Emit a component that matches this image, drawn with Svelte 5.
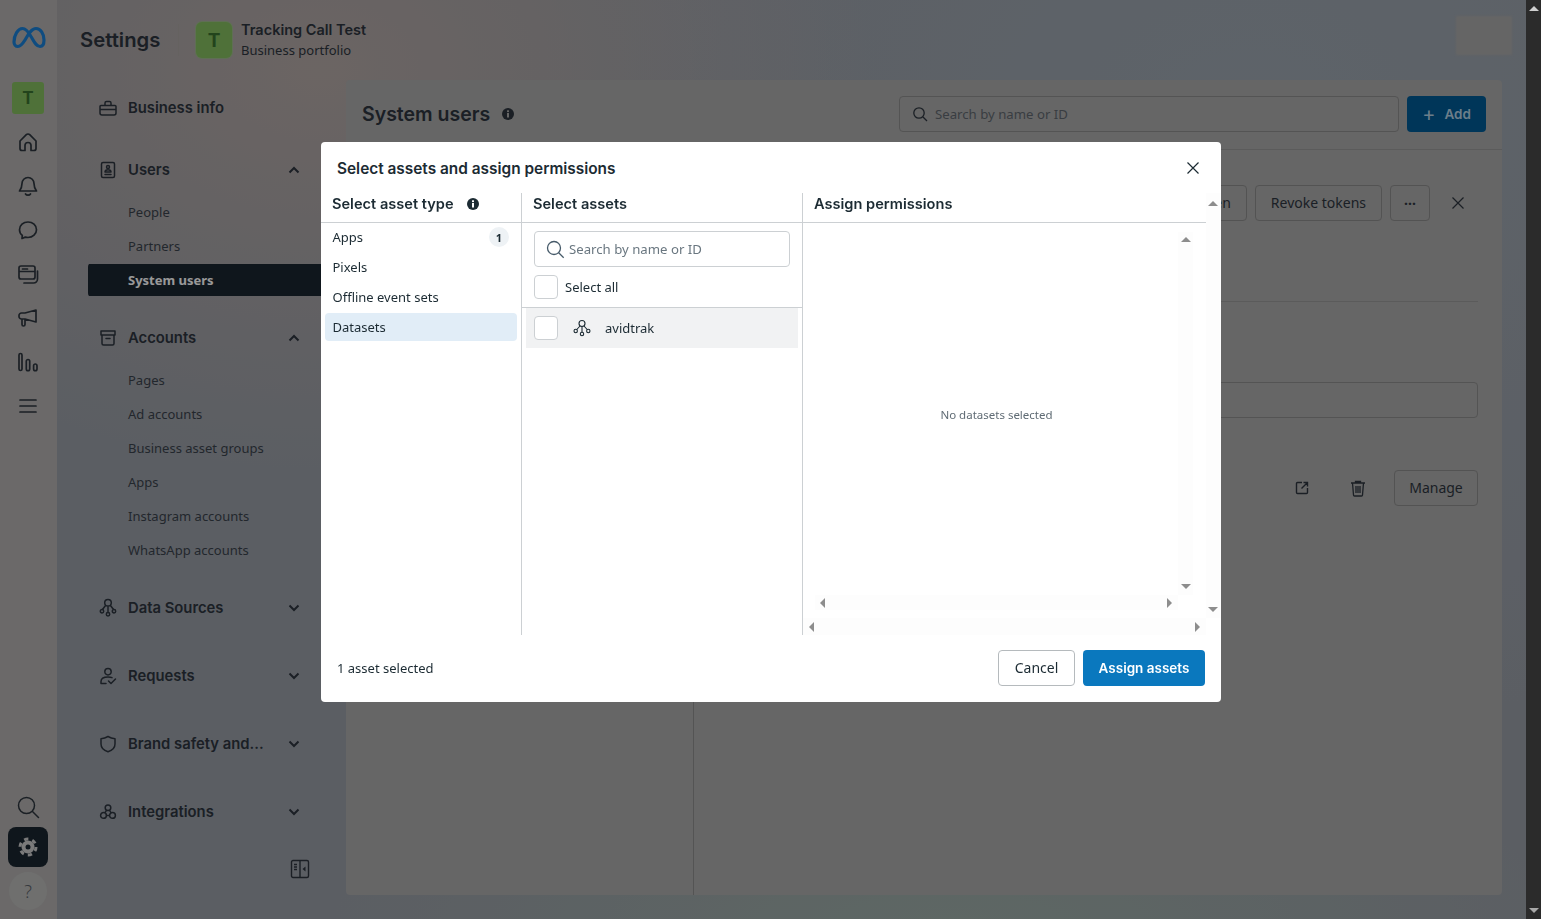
<script lang="ts">
  const railTop = [
    'M4 11 10.300 4.700a2.400 2.400 0 0 1 3.400 0L20 11v7.500a2 2 0 0 1-2 2h-3V15.500a3 3 0 0 0-6 0v5H6a2 2 0 0 1-2-2z',
    'M12 3.500a6 6 0 0 0-6 6c0 3.500-1 5.500-2.500 7.500h17c-1.500-2-2.500-4-2.500-7.500a6 6 0 0 0-6-6zM9.500 20c1 1.500 4 1.500 5 0',
    'M12 4c-4.700 0-8.500 3.400-8.500 7.700 0 2.300 1 4.300 2.800 5.700L6 20.500l3.300-1.400c.9.200 1.800.4 2.700.4 4.700 0 8.500-3.500 8.500-7.800S16.700 4 12 4z',
    'M5 4h12a2 2 0 0 1 2 2v9a2 2 0 0 1-2 2H5a2 2 0 0 1-2-2V6a2 2 0 0 1 2-2zM3 9.500h16M6.500 7h5M21.500 9v8a4 4 0 0 1-4 4H8',
    'M20 4v12L9 13H5.500a2.500 2.500 0 0 1-2.500-2.500v-1A2.500 2.500 0 0 1 5.500 7H9zM6 13v5.500A1.500 1.500 0 0 0 7.500 20h0A1.500 1.500 0 0 0 9 18.500V13',
    'M4.500 3.500a1.500 1.500 0 0 1 1.500 1.500v14a1.500 1.500 0 0 1-3 0V5a1.500 1.500 0 0 1 1.500-1.500zM12 9.500A1.700 1.700 0 0 1 13.700 11.200v7.800a1.700 1.700 0 0 1-3.400 0v-7.800A1.700 1.700 0 0 1 12 9.500zM19.300 14a1.700 1.700 0 0 1 1.700 1.700V19a1.700 1.700 0 0 1-3.400 0v-3.300a1.700 1.700 0 0 1 1.700-1.700z',
    'M4 6h16M4 12h16M4 18h16'
  ];

  const groups = [
    { label: 'Business info', icon: 'M3 7.500h14a1 1 0 0 1 1 1V15a2 2 0 0 1-2 2H4a2 2 0 0 1-2-2V8.500a1 1 0 0 1 1-1zM7 7.500V5a1.500 1.500 0 0 1 1.500-1.500h3A1.500 1.500 0 0 1 13 5v2.500M2 11.500h16', gap: 'plain' },
    { label: 'Users', open: true, subs: ['People', 'Partners', 'System users'], icon: 'M5 2.500h10a1.500 1.500 0 0 1 1.500 1.500v12a1.500 1.500 0 0 1-1.500 1.500H5A1.500 1.500 0 0 1 3.500 16V4A1.500 1.500 0 0 1 5 2.500zM10 5.500a1.500 1.500 0 1 0 0 3 1.500 1.500 0 0 0 0-3zM7 12c0-3 6-3 6 0zM7 14.500h6' },
    { label: 'Accounts', open: true, subs: ['Pages', 'Ad accounts', 'Business asset groups', 'Apps', 'Instagram accounts', 'WhatsApp accounts'], icon: 'M3 3h14v4H3zM4 7v8.500A1.500 1.500 0 0 0 5.500 17h9a1.500 1.500 0 0 0 1.500-1.500V7M8 10.500h4' },
    { label: 'Data Sources', icon: 'M10 1.500a3.300 3.300 0 1 0 0 6.600 3.300 3.300 0 0 0 0-6.600zM7.500 7.500 4.500 11.500M12.500 7.500l3 4M10 8v6.500M4 11.500a1.700 1.700 0 1 0 0 3.400 1.700 1.700 0 0 0 0-3.400zM16 11.500a1.700 1.700 0 1 0 0 3.400 1.700 1.700 0 0 0 0-3.400zM10 14.500a1.700 1.700 0 1 0 0 3.400 1.700 1.700 0 0 0 0-3.400z' },
    { label: 'Requests', icon: 'M10 2.500a3.200 3.200 0 1 0 0 6.400 3.200 3.200 0 0 0 0-6.400zM3 17.500v-2c0-3 3-4.500 7-4.500 1.500 0 3 .2 4 .7M3 17.500h5M10.500 15l2.500 2.500 4.500-4.500' },
    { label: 'Brand safety and...', icon: 'M10 2.500c2.500 1.500 4.500 2 7 2.200V10c0 4-3 6.500-7 7.800C6 16.500 3 14 3 10V4.700c2.500-.2 4.500-.7 7-2.200z' },
    { label: 'Integrations', icon: 'M10 3a2.800 2.800 0 1 0 0 5.600A2.800 2.800 0 0 0 10 3zM5.500 10.500a2.900 2.900 0 1 0 0 5.800 2.900 2.900 0 0 0 0-5.800zM14.500 10.500a2.900 2.900 0 1 0 0 5.800 2.900 2.900 0 0 0 0-5.800zM8.500 8.300 6.800 10.800M11.500 8.300l1.700 2.500M8.400 13.400h3.200' }
  ];

  const assetTypes = [
    { label: 'Apps', badge: 1 },
    { label: 'Pixels' },
    { label: 'Offline event sets' },
    { label: 'Datasets', active: true }
  ];
</script>

<div class="app">
  <div class="page">
    <aside class="rail">
      <svg class="meta" width="36" height="24" viewBox="0 0 36 24" fill="none" stroke="#1a7fd6" stroke-width="3.200">
        <path d="M3 16C3 9 7 2.500 11.500 2.500 15 2.500 17.500 6 20 10.500 23 15.500 25 20.500 29 20.500 32 20.500 33 17.500 33 14 33 7.500 29.500 2.500 25 2.500 20 2.500 17 9 14 14 11.500 18 9.500 20.500 7 20.500 4.500 20.500 3 18.500 3 16z"/>
      </svg>
      <div class="t-box">T</div>
      {#each railTop as d}
        <svg class="rail-icon" width="24" height="24" viewBox="0 0 24 24" fill="none" stroke="#2d353e" stroke-width="1.700" stroke-linejoin="round" stroke-linecap="round"><path {d}/></svg>
      {/each}
      <div class="rail-bottom">
        <svg width="24" height="24" viewBox="0 0 24 24" fill="none" stroke="#2d353e" stroke-width="1.500" stroke-linecap="round"><circle cx="10.500" cy="10.500" r="8"/><path d="m16.500 16.500 6 6"/></svg>
        <div class="gear-box">
          <svg width="20" height="20" viewBox="0 0 20 20"><circle cx="10" cy="10" r="6.500" fill="#ccc"/><circle cx="10" cy="10" r="8" fill="none" stroke="#ccc" stroke-width="3" stroke-dasharray="4.300 4.080"/><circle cx="10" cy="10" r="2.500" fill="#1a2530"/></svg>
        </div>
        <div class="help">?</div>
      </div>
    </aside>

    <div class="main">
      <header class="topbar">
        <h1>Settings</h1>
        <span class="top-div"></span>
        <div class="avatar">T</div>
        <div class="portfolio">
          <strong>Tracking Call Test</strong>
          <span>Business portfolio</span>
        </div>
        <div class="blurred"></div>
      </header>

      <div class="body">
        <nav class="sidebar">
          {#each groups as g}
            <div class="group" class:open={g.open} class:plain={g.gap}>
              <div class="sec">
                <svg width="20" height="20" viewBox="0 0 20 20" fill="none" stroke="#2d353e" stroke-width="1.500" stroke-linejoin="round" stroke-linecap="round"><path d={g.icon}/></svg>
                <span>{g.label}</span>
                {#if !g.gap}
                  <svg class="chev" width="12" height="8" viewBox="0 0 12 8" fill="none" stroke="#2d353e" stroke-width="2"><path d={g.open ? 'M1.500 6.500 6 2l4.500 4.500' : 'M1.500 1.500 6 6l4.500-4.500'}/></svg>
                {/if}
              </div>
              {#if g.subs}
                <div class="subs">
                  {#each g.subs as s}
                    <div class="sub" class:current={s === 'System users'}><span>{s}</span></div>
                  {/each}
                </div>
              {/if}
            </div>
          {/each}
          <svg class="collapse" width="20" height="20" viewBox="0 0 20 20" fill="none" stroke="#2d353e" stroke-width="1.400"><rect x="1.500" y="1.500" width="17" height="17" rx="1.500"/><path d="M10 1.500v17M4 5.500h3M4 8h3M4 10.500h3"/><path d="m15.500 7.500-3 2.500 3 2.500z" fill="#2d353e" stroke="none"/></svg>
        </nav>

        <section class="panel">
          <div class="panel-head">
            <h2>System users</h2>
            <svg width="14" height="14" viewBox="0 0 14 14"><circle cx="7" cy="7" r="6" fill="#2d353e"/><rect x="6" y="6" width="2" height="4.500" fill="#aaa"/><rect x="6" y="3.300" width="2" height="1.800" fill="#aaa"/></svg>
            <div class="panel-search">
              <svg width="16" height="16" viewBox="0 0 16 16" fill="none" stroke="#2d353e" stroke-width="1.300"><circle cx="7" cy="7" r="5.200"/><path d="m11 11 4 4"/></svg>
              <span>Search by name or ID</span>
            </div>
            <div class="add"><span class="plus">+</span> Add</div>
          </div>
          <div class="panel-body">
            <div class="list-col"></div>
            <div class="detail">
              <div class="actions">
                <div class="btn">Generate token</div>
                <div class="btn">Revoke tokens</div>
                <div class="btn dots">···</div>
                <svg class="x" width="20" height="20" viewBox="0 0 20 20" fill="none" stroke="#2d353e" stroke-width="1.200"><path d="m4.500 4.500 11 11M15.500 4.500l-11 11"/></svg>
              </div>
              <div class="rule"></div>
              <div class="field"></div>
              <div class="asset-row">
                <svg width="16" height="16" viewBox="0 0 16 16" fill="none" stroke="#2d353e" stroke-width="1.400"><path d="M8 2.500H3.500a1 1 0 0 0-1 1v9a1 1 0 0 0 1 1h9a1 1 0 0 0 1-1V8M9.500 2.500h4v4M13 3l-5.500 5.500"/></svg>
                <svg class="trash" width="18" height="18" viewBox="0 0 18 18" fill="none" stroke="#2d353e" stroke-width="1.300"><path d="M2 4h14M6.500 4V2.500h5V4M3.500 4l1 12a1 1 0 0 0 1 1h7a1 1 0 0 0 1-1l1-12M7 7v7M9 7v7M11 7v7"/></svg>
                <div class="btn manage">Manage</div>
              </div>
            </div>
          </div>
        </section>
      </div>
    </div>
  </div>

  <div class="scrollbar">
    <i class="tri up light"></i>
    <i class="tri down light"></i>
  </div>

  <div class="overlay">
    <div class="modal">
      <div class="modal-head">
        <h3>Select assets and assign permissions</h3>
        <svg width="16" height="16" viewBox="0 0 16 16" fill="none" stroke="#1c2b33" stroke-width="1.200"><path d="m2.500 2.500 11 11M13.500 2.500l-11 11"/></svg>
      </div>

      <div class="cols">
        <div class="col type-col">
          <div class="col-head">
            Select asset type
            <svg class="info" width="14" height="14" viewBox="0 0 14 14"><circle cx="7" cy="7" r="6" fill="#1c2b33"/><rect x="6" y="6" width="2" height="4.500" fill="#fff"/><rect x="6" y="3.300" width="2" height="1.800" fill="#fff"/></svg>
          </div>
          <div class="type-list">
            {#each assetTypes as t}
              <div class="type-row" class:active={t.active}>
                <span>{t.label}</span>
                {#if t.badge}<b class="badge">{t.badge}</b>{/if}
              </div>
            {/each}
          </div>
        </div>

        <div class="col asset-col">
          <div class="col-head">Select assets</div>
          <div class="asset-search">
            <svg width="20" height="20" viewBox="0 0 20 20" fill="none" stroke="#465a69" stroke-width="1.300"><circle cx="9" cy="9" r="6.500"/><path d="m13.700 13.700 5 5"/></svg>
            <span>Search by name or ID</span>
          </div>
          <label class="select-all"><span class="check"></span>Select all</label>
          <div class="asset-item">
            <span class="check"></span>
            <svg width="20" height="20" viewBox="0 0 20 20" fill="none" stroke="#1c2b33" stroke-width="1.100"><circle cx="10" cy="5.500" r="3"/><path d="M8 8 4.800 11.500M12 8l3.200 3.500M10 8.500v6"/><circle cx="3.700" cy="13" r="1.700"/><circle cx="16.300" cy="13" r="1.700"/><circle cx="10" cy="16" r="1.700"/></svg>
            <span>avidtrak</span>
          </div>
        </div>

        <div class="col perm-col">
          <div class="perm-main">
            <div class="col-head">Assign permissions</div>
            <div class="perm-inner">
              <div class="scrollbox">
                <div class="empty">No datasets selected</div>
                <div class="track v"><i class="tri up"></i><i class="tri down"></i></div>
                <div class="track h"><i class="tri left"></i><i class="tri right"></i></div>
              </div>
            </div>
          </div>
          <div class="track v outer"><i class="tri up"></i><i class="tri down"></i></div>
          <div class="track h outer"><i class="tri left"></i><i class="tri right"></i></div>
        </div>
      </div>

      <div class="modal-foot">
        <span>1 asset selected</span>
        <div class="foot-btns">
          <div class="cancel">Cancel</div>
          <div class="assign">Assign assets</div>
        </div>
      </div>
    </div>
  </div>
</div>

<style>
  :global(body) {
    margin: 0;
    font-family: "Noto Sans", "Liberation Sans", sans-serif;
    color: #2d353e;
    overflow: hidden;
  }

  .app {
    display: flex;
    width: 1541px;
    height: 919px;
    position: relative;
    overflow: hidden;
  }

  .page {
    flex: 1;
    min-width: 0;
    display: flex;
    background:
      radial-gradient(560px 400px at 320px 70px, #b3a8a5, transparent),
      radial-gradient(800px 620px at 1250px 120px, #9da6b0, transparent),
      radial-gradient(620px 200px at 950px 930px, #9dada7, transparent),
      #989da6;
  }

  .scrollbar {
    width: 15px;
    background: #2b2b2b;
    position: relative;
    z-index: 5;
    display: flex;
    flex-direction: column;
    justify-content: space-between;
    align-items: center;
    padding: 6px 0;
    box-sizing: border-box;
  }

  .overlay {
    position: fixed;
    inset: 0;
    background: rgba(0, 0, 0, 0.4);
    z-index: 3;
    display: flex;
    justify-content: center;
    align-items: flex-start;
    padding: 142px 0 0 1px;
    box-sizing: border-box;
  }

  /* rail */
  .rail {
    width: 57px;
    flex-shrink: 0;
    background: #b2b0af;
    display: flex;
    flex-direction: column;
    align-items: center;
    box-sizing: border-box;
    padding: 26px 1px 9px 0;
  }

  .meta {
    margin: 0 0 32px 2px;
  }

  .t-box {
    width: 32px;
    height: 32px;
    border-radius: 3px;
    background: #84bd60;
    color: #3a7230;
    font: 700 17px "Inter", sans-serif;
    display: flex;
    align-items: center;
    justify-content: center;
    margin-bottom: 16px;
  }

  .rail-icon {
    margin-bottom: 20px;
  }

  .rail-bottom {
    margin-top: auto;
    display: flex;
    flex-direction: column;
    align-items: center;
  }

  .gear-box {
    width: 40px;
    height: 40px;
    border-radius: 8px;
    background: #1a2530;
    display: flex;
    align-items: center;
    justify-content: center;
    margin: 8px 0 5px;
  }

  .help {
    width: 38px;
    height: 38px;
    border-radius: 50%;
    background: #b9b9b8;
    color: #5a6168;
    display: flex;
    align-items: center;
    justify-content: center;
    font-size: 18px;
    font-weight: 300;
  }

  /* top */
  .main {
    flex: 1;
    min-width: 0;
    display: flex;
    flex-direction: column;
  }

  .topbar {
    height: 80px;
    flex-shrink: 0;
    display: flex;
    align-items: center;
    padding-left: 23px;
    box-sizing: border-box;
    position: relative;
  }

  h1 {
    margin: 0 0 2px;
    font: 600 20.300px "Inter", sans-serif;
    width: 98px;
  }

  .top-div {
    width: 1px;
    height: 32px;
    background: #a8a3a1;
    margin-right: 17px;
  }

  .avatar {
    width: 36px;
    height: 36px;
    border-radius: 6px;
    background: #84bd60;
    box-shadow: 0 0 0 1px #9fb98d;
    color: #3a7230;
    font: 700 19px "Inter", sans-serif;
    display: flex;
    align-items: center;
    justify-content: center;
    margin-right: 9px;
  }

  .portfolio {
    display: flex;
    flex-direction: column;
    gap: 3px;
  }

  .portfolio strong {
    font: 600 14.500px/18px "Inter", sans-serif;
  }

  .portfolio span {
    font-size: 13px;
    line-height: 18px;
    margin-top: -1px;
  }

  .blurred {
    position: absolute;
    right: 14px;
    top: 16px;
    width: 56px;
    height: 39px;
    background: #a9a9a9;
    filter: blur(1px);
  }

  .body {
    flex: 1;
    min-height: 0;
    display: flex;
    padding: 0 24px 24px 0;
  }

  /* sidebar */
  .sidebar {
    width: 289px;
    flex-shrink: 0;
    box-sizing: border-box;
    padding: 12px 16px 16px 31px;
    display: flex;
    flex-direction: column;
  }

  .group {
    margin-bottom: 36px;
    flex-shrink: 0;
  }

  .group:nth-last-child(2) {
    margin-bottom: 0;
  }

  .group.open {
    margin-bottom: 25px;
  }

  .group.plain {
    margin-bottom: 30px;
  }

  .sec {
    height: 32px;
    display: flex;
    align-items: center;
    gap: 10px;
    padding-left: 10px;
    font: 600 14.800px "Inter", sans-serif;
  }

  .sec span {
    margin-top: -1px;
  }

  .chev {
    margin-left: auto;
    margin-right: 30px;
  }

  .subs {
    margin-top: 9px;
  }

  .sub {
    height: 34px;
    display: flex;
    align-items: center;
    padding-left: 40px;
    font-size: 13px;
    color: #3a424b;
  }

  .sub.current span {
    font-weight: 700;
    color: #fff;
  }

  .sub.current {
    background: linear-gradient(#1a2530, #1a2530) center / 100% 32px no-repeat;
    border-radius: 4px;
  }

  .collapse {
    margin-top: auto;
    align-self: flex-end;
    margin-right: 20px;
    flex-shrink: 0;
  }

  /* panel */
  .panel {
    flex: 1;
    min-width: 0;
    background: #aaa;
    border-radius: 4px;
    display: flex;
    flex-direction: column;
  }

  .panel-head {
    height: 70px;
    flex-shrink: 0;
    box-sizing: border-box;
    border-bottom: 1px solid #989898;
    display: flex;
    align-items: center;
    gap: 8px;
    padding: 0 16px 1px;
  }

  h2 {
    margin: 0 3px 0 0;
    font: 600 19.500px "Inter", sans-serif;
  }

  .panel-search {
    margin-left: auto;
    width: 500px;
    height: 36px;
    box-sizing: border-box;
    border: 1px solid #8c8c8c;
    border-radius: 4px;
    display: flex;
    align-items: center;
    gap: 7px;
    padding-left: 12px;
    font-size: 13.200px;
    color: #60676e;
  }

  .add {
    width: 79px;
    height: 36px;
    border-radius: 4px;
    background: #005a94;
    color: #b4d2e6;
    display: flex;
    align-items: center;
    justify-content: center;
    gap: 9px;
    font: 600 13.500px "Inter", sans-serif;
  }

  .plus {
    font-size: 20px;
    font-weight: 400;
  }

  .panel-body {
    flex: 1;
    display: flex;
    min-height: 0;
  }

  .list-col {
    width: 347px;
    border-right: 1px solid #8c8c8c;
    flex-shrink: 0;
  }

  .detail {
    flex: 1;
    min-width: 0;
    padding: 35px 24px 0;
    display: flex;
    flex-direction: column;
  }

  .actions,
  .asset-row {
    display: flex;
    justify-content: flex-end;
    align-items: center;
    gap: 8px;
  }

  .btn {
    height: 36px;
    box-sizing: border-box;
    border: 1px solid #8a8a8a;
    border-radius: 4px;
    padding: 0 15px 2px;
    display: flex;
    align-items: center;
    font-size: 14px;
    white-space: nowrap;
  }

  .btn.dots {
    width: 40px;
    padding: 0;
    justify-content: center;
    font-weight: 700;
  }

  .x {
    margin: 0 10px 0 10px;
  }

  .rule {
    height: 1px;
    background: #989898;
    margin-top: 80px;
  }

  .field {
    height: 36px;
    box-sizing: border-box;
    border: 1px solid #8c8c8c;
    border-radius: 4px;
    margin-top: 80px;
  }

  .asset-row {
    margin-top: 52px;
  }

  .trash {
    margin: 0 19px 0 31px;
  }

  .manage {
    width: 84px;
    justify-content: center;
    padding: 0 0 2px;
  }

  /* modal */
  .modal {
    width: 900px;
    height: 560px;
    background: #fff;
    border-radius: 4px;
    color: #1c2b33;
    display: flex;
    flex-direction: column;
    font-size: 13px;
  }

  .modal-head {
    height: 51px;
    flex-shrink: 0;
    box-sizing: border-box;
    display: flex;
    align-items: center;
    justify-content: space-between;
    padding: 1px 20px 0 16px;
  }

  h3 {
    margin: 0;
    font: 600 15.400px "Inter", sans-serif;
  }

  .cols {
    height: 442px;
    display: flex;
    flex-shrink: 0;
  }

  .col {
    box-sizing: border-box;
  }

  .type-col {
    width: 201px;
    border-right: 1px solid #ccd0d3;
  }

  .asset-col {
    width: 281px;
    border-right: 1px solid #ccd0d3;
  }

  .col-head {
    height: 30px;
    box-sizing: border-box;
    border-bottom: 1px solid #ccd0d3;
    padding: 0 0 8px 11px;
    display: flex;
    align-items: center;
    font: 600 14.600px "Inter", sans-serif;
  }

  .info {
    margin-left: 12px;
  }

  .type-list {
    display: flex;
    flex-direction: column;
    gap: 2px;
    padding: 0 4px;
  }

  .type-row {
    height: 28px;
    display: flex;
    align-items: center;
    justify-content: space-between;
    padding: 0 8px 0 7.500px;
    border-radius: 4px;
  }

  .type-row.active {
    background: #e1edf7;
  }

  .badge {
    width: 20px;
    height: 20px;
    border-radius: 50%;
    background: #eef2f5;
    font-size: 11px;
    display: flex;
    align-items: center;
    justify-content: center;
  }

  .asset-search {
    margin: 8px 12px 0;
    height: 36px;
    box-sizing: border-box;
    border: 1px solid #ccd0d3;
    border-radius: 4px;
    display: flex;
    align-items: center;
    gap: 4px;
    padding-left: 10px;
    font-size: 13.200px;
    color: #6a7780;
  }

  .select-all {
    display: flex;
    align-items: center;
    gap: 7px;
    margin: 8px 12px;
  }

  .check {
    width: 24px;
    height: 24px;
    box-sizing: border-box;
    background: #fff;
    border: 1px solid #ccd0d3;
    border-radius: 4px;
    flex-shrink: 0;
  }

  .asset-item {
    border-top: 1px solid #ccd0d3;
    height: 41px;
    box-sizing: border-box;
    display: flex;
    align-items: center;
    padding-left: 12px;
    background: linear-gradient(#f1f2f3, #f1f2f3) center / 272px 40px no-repeat;
    border-radius: 0;
  }

  .asset-item svg {
    margin: 0 13px 0 14px;
  }

  .perm-col {
    width: 418px;
    display: grid;
    grid-template-columns: 403px 15px;
    grid-template-rows: 425px 17px;
  }

  .perm-main {
    display: flex;
    flex-direction: column;
    min-height: 0;
  }

  .perm-inner {
    flex: 1;
    padding: 9px 13px 8px 12px;
    min-height: 0;
  }

  .scrollbox {
    height: 100%;
    display: grid;
    grid-template-columns: 1fr 15px;
    grid-template-rows: 1fr 15px;
  }

  .empty {
    display: flex;
    align-items: center;
    justify-content: center;
    font-size: 11.500px;
    color: #5f6b74;
    padding-top: 2px;
  }

  .track {
    display: flex;
    justify-content: space-between;
    align-items: center;
    background: #fdfdfd;
  }

  .track.v {
    flex-direction: column;
    padding: 5px 0 6px;
  }

  .track.h {
    padding: 0 6px 0 5px;
    grid-column: 1;
  }

  .track.outer.v {
    padding: 8px 2px 6px 0;
  }

  .track.outer.h {
    padding: 0 6px;
  }

  .tri {
    width: 0;
    height: 0;
    display: block;
    border-style: solid;
    border-color: transparent;
  }

  .tri.up {
    border-width: 0 5px 5px;
    border-bottom-color: #8d8d8d;
  }

  .tri.down {
    border-width: 5px 5px 0;
    border-top-color: #8d8d8d;
  }

  .tri.left {
    border-width: 5px 5px 5px 0;
    border-right-color: #8d8d8d;
  }

  .tri.right {
    border-width: 5px 0 5px 5px;
    border-left-color: #8d8d8d;
  }

  .tri.light.up {
    border-bottom-color: #cfcfcf;
  }

  .tri.light.down {
    border-top-color: #a9a9a9;
  }

  .modal-foot {
    flex: 1;
    display: flex;
    align-items: center;
    justify-content: space-between;
    padding: 0 16px 2px;
  }

  .foot-btns {
    display: flex;
    gap: 8px;
  }

  .cancel,
  .assign {
    height: 36px;
    box-sizing: border-box;
    border-radius: 4px;
    display: flex;
    align-items: center;
    justify-content: center;
    font-size: 14px;
  }

  .cancel {
    width: 77px;
    border: 1px solid #b5babd;
  }

  .assign {
    width: 122px;
    background: #0a78be;
    color: #fff;
    font: 600 13.500px "Inter", sans-serif;
  }
</style>
